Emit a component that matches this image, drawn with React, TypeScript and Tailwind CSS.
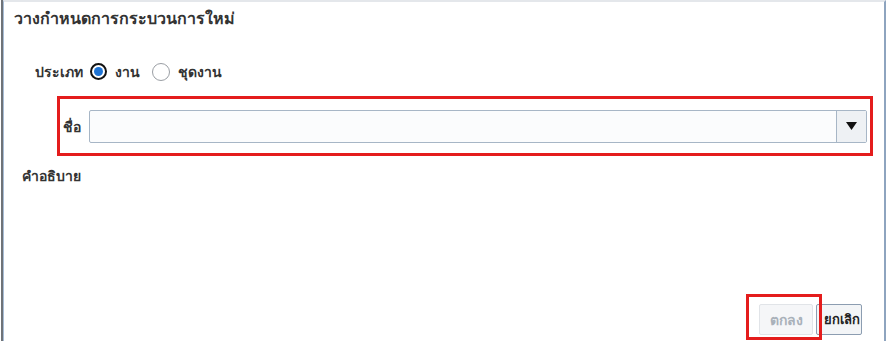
import React from "react";

/* Dialog: schedule a new process */

const FONT = { fontFamily: '"Noto Sans", "DejaVu Sans", "Liberation Sans", sans-serif' };

function Radio({ checked, label }: { checked?: boolean; label: string }) {
  return (
    <label className="flex items-center gap-[8px]">
      {checked ? (
        <span className="flex h-[17px] w-[17px] items-center justify-center rounded-full border-2 border-[#111] bg-white">
          <span className="h-[9px] w-[9px] rounded-full bg-[#1f74d4]" />
        </span>
      ) : (
        <span className="h-[18px] w-[18px] rounded-full border border-[#9a9ea4] bg-white" />
      )}
      <span className="text-[14px] font-semibold text-[#333]">{label}</span>
    </label>
  );
}

export default function App() {
  return (
    <div
      className="relative h-[341px] w-[887px] overflow-hidden bg-white"
      style={FONT}
    >
      <div className="ml-[1px] flex h-full border-l-2 border-[#6f7378]">
        <div className="mr-[1px] flex h-full flex-1 flex-col border-l border-r-2 border-t-2 border-l-[#a8bdd6] border-r-[#8ea4bf] border-t-[#e4e7eb]">
          {/* Title */}
          <div className="mt-[5px] pl-[10px] text-[16px] font-semibold leading-[22px] text-[#333]">
            วางกำหนดการกระบวนการใหม่
          </div>

          {/* Type */}
          <div className="mt-[32px] flex items-center gap-[7px] pl-[31px]">
            <span className="text-[14px] font-semibold text-[#333]">ประเภท</span>
            <div className="flex items-center gap-[12px]">
              <Radio checked label="งาน" />
              <Radio label="ชุดงาน" />
            </div>
          </div>

          {/* Name */}
          <div className="ml-[53px] mt-[14px] flex h-[60px] w-[816px] items-center border-[3px] border-[#e41c1c] pl-[3px] pr-[3px]">
            <span className="w-[26px] text-[14px] font-semibold text-[#333]">ชื่อ</span>
            <div className="flex h-[33px] flex-1 rounded-[2px] border border-[#a7b6c6] bg-[#fbfcfd]">
              <div className="flex-1" />
              <div className="flex w-[30px] items-center justify-center border-l border-[#a7b6c6] bg-[#eef1f4]">
                <svg width="11" height="8" viewBox="0 0 11 8">
                  <path d="M0 0h11L5.5 8z" fill="#111" />
                </svg>
              </div>
            </div>
          </div>

          {/* Description */}
          <div className="mt-[9px] pl-[18px] text-[14px] font-semibold text-[#333]">
            คำอธิบาย
          </div>

          <div className="flex-1" />

          {/* Buttons */}
          <div className="mb-[6px] flex justify-end gap-[3px] pr-[22px]">
            <button className="h-[31px] w-[54px] rounded-[2px] border border-[#e1e4e8] bg-[#f5f6f8] text-[14px] font-semibold text-[#a9b1ba]">
              ตกลง
            </button>
            <button className="h-[31px] w-[46px] rounded-[2px] border border-[#8c9db1] bg-[#f3f5f7] pl-[6px] text-[13px] font-bold text-[#222]">
              ยกเลิก
            </button>
          </div>
        </div>
      </div>

      {/* annotation around OK button */}
      <div className="pointer-events-none absolute left-[746px] top-[294px] h-[46px] w-[76px] border-[3px] border-[#e41c1c]" />
    </div>
  );
}
